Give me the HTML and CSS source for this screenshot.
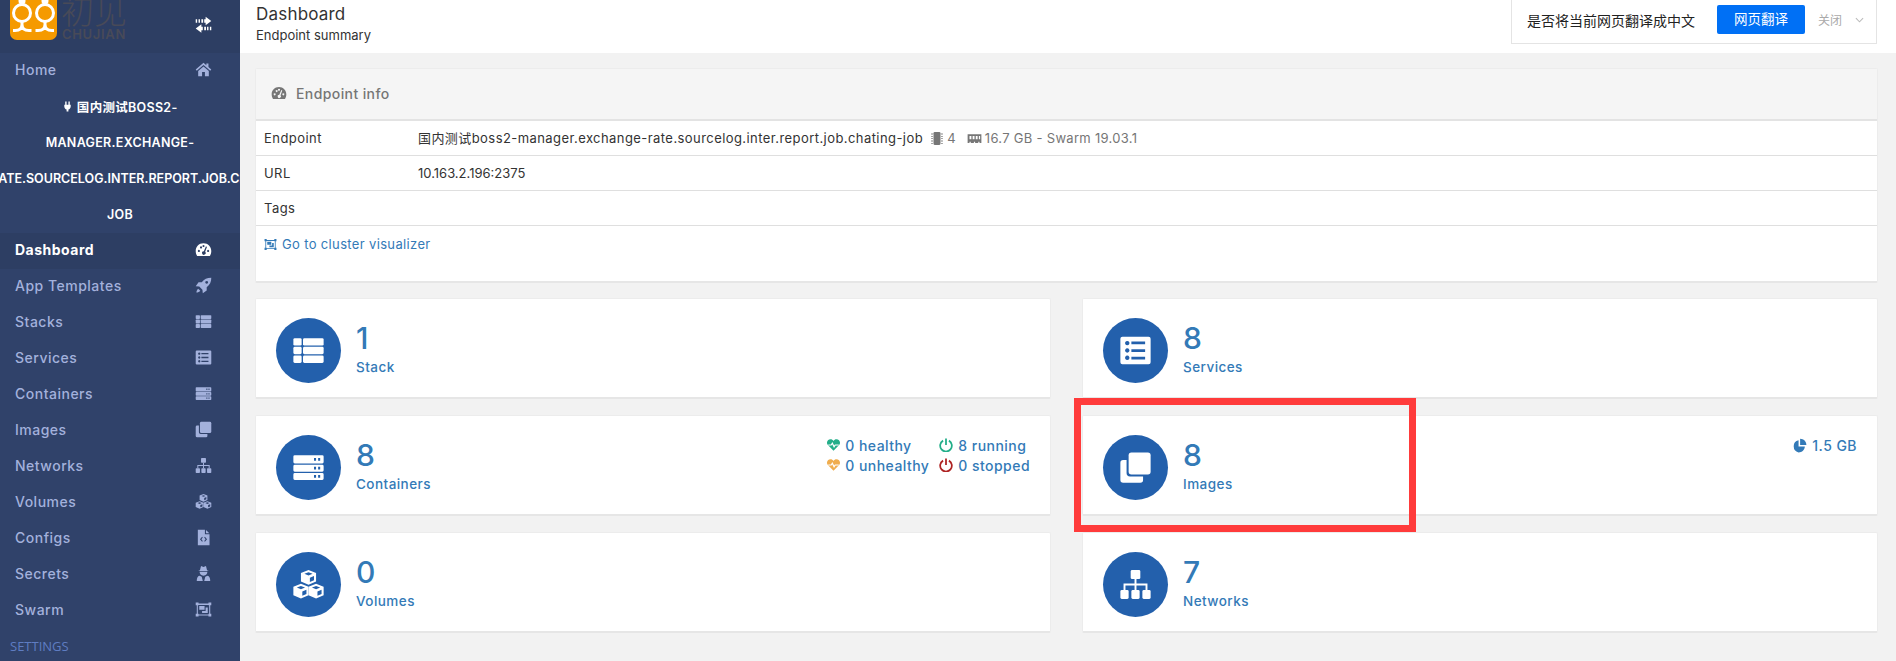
FILE: index.html
```html
<!DOCTYPE html>
<html lang="en">
<head>
    <meta charset="UTF-8">
    <meta name="viewport" content="width=device-width, initial-scale=1.0">
    <title>Dashboard</title>
    <link rel="stylesheet" href="styles.css">
</head>
<body>
    <!-- icon sprite -->
    <svg class="sprite" width="0" height="0">
        <defs>
            <symbol id="i-exchange" viewBox="0 0 24 24"><path d="M15 1l8 6-8 6V9.500H13v-5h2zM1 4.500h2v5H1zM5 4.500h2v5H5zM9 4.500h2.500v5H9zM9 11.500l-8 6 8 6V20h2v-5H9zM13 15h2.500v5H13zM17 15h2v5h-2zM21 15h2v5h-2z"/></symbol>
            <symbol id="i-home" viewBox="0 0 24 24"><path d="M12 2.500L1 12l1.500 1.700L12 5.600l9.500 8.100L23 12l-4-3.500V3.500h-3v2.500zM4.500 14L12 7.700 19.500 14v7.500H14v-6h-4v6H4.500z"/></symbol>
            <symbol id="i-plug" viewBox="0 0 24 24"><path d="M7 1h3v7H7zM14 1h3v7h-3zM5 8h14v4c0 3.500-2.500 6-5 6.500V23h-4v-4.500C7.500 18 5 15.500 5 12z"/></symbol>
            <symbol id="i-tach" viewBox="0 0 24 24"><path fill-rule="evenodd" d="M12 3C5.400 3 1 8 1 14c0 2.600.7 5 2 7h18c1.300-2 2-4.400 2-7 0-6-4.600-11-11-11zM5.500 12.500a1.500 1.500 0 1 0 .01 0zM8.500 7.500a1.500 1.500 0 1 0 .01 0zM12 5.500a1.500 1.500 0 1 0 .01 0zM18.500 12.500a1.500 1.500 0 1 0 .01 0zM15.500 7.500l-3 7a2.500 2.500 0 1 0 1.800.8l2.600-7z"/></symbol>
            <symbol id="i-rocket" viewBox="0 0 24 24"><path fill-rule="evenodd" d="M23 1c-6 0-10 2-13.500 6.500H5L1 13l5 .5 4.500 4.500.5 5 5.500-4v-4.500C21 11 23 7 23 1zM16.500 5.500a2 2 0 1 0 .01 0z"/><path d="M4.500 16.500C3 17.500 2 20 2 22c2 0 4.500-1 5.500-2.500z"/></symbol>
            <symbol id="i-stack" viewBox="0 0 24 24"><rect x="1" y="3" width="6" height="5.400" rx="1"/><rect x="8" y="3" width="15" height="5.400" rx="1"/><rect x="1" y="9.300" width="6" height="5.400" rx="1"/><rect x="8" y="9.300" width="15" height="5.400" rx="1"/><rect x="1" y="15.600" width="6" height="5.400" rx="1"/><rect x="8" y="15.600" width="15" height="5.400" rx="1"/></symbol>
            <symbol id="i-list" viewBox="0 0 24 24"><path fill-rule="evenodd" d="M2.500 2h19A1.500 1.500 0 0 1 23 3.500v17a1.500 1.500 0 0 1-1.500 1.500h-19A1.500 1.500 0 0 1 1 20.500v-17A1.500 1.500 0 0 1 2.500 2zM6 5a1.600 1.600 0 1 0 .01 0zM6 10.400a1.600 1.600 0 1 0 .01 0zM6 15.700a1.600 1.600 0 1 0 .01 0zM9 5.500h10v2H9zM9 11h10v2H9zM9 16.500h10v2H9z"/></symbol>
            <symbol id="i-server" viewBox="0 0 24 24"><path fill-rule="evenodd" d="M2 3h20a1 1 0 0 1 1 1v4a1 1 0 0 1-1 1H2a1 1 0 0 1-1-1V4a1 1 0 0 1 1-1zM16 5v2h1.500V5zM19 5v2h1.500V5zM2 10h20a1 1 0 0 1 1 1v3a1 1 0 0 1-1 1H2a1 1 0 0 1-1-1v-3a1 1 0 0 1 1-1zM16 11.500v2h1.500v-2zM19 11.500v2h1.500v-2zM2 16h20a1 1 0 0 1 1 1v3a1 1 0 0 1-1 1H2a1 1 0 0 1-1-1v-3a1 1 0 0 1 1-1zM16 17.500v2h1.500v-2zM19 17.500v2h1.500v-2z"/></symbol>
            <symbol id="i-clone" viewBox="0 0 24 24"><rect x="7" y="1" width="16" height="16" rx="2"/><path d="M5.500 6.500H3a2 2 0 0 0-2 2V21a2 2 0 0 0 2 2h12.500a2 2 0 0 0 2-2v-2.500H8a2.500 2.500 0 0 1-2.500-2.500z"/></symbol>
            <symbol id="i-sitemap" viewBox="0 0 24 24"><rect x="8.500" y="1.500" width="7" height="6.500" rx="1"/><rect x="1" y="16" width="6" height="6.500" rx="1"/><rect x="9" y="16" width="6" height="6.500" rx="1"/><rect x="17" y="16" width="6" height="6.500" rx="1"/><path d="M11.300 8h1.400v3.300H20.700V16h-1.400v-3.300h-6.600V16h-1.400v-3.300H4.700V16H3.300v-4.700h8z"/></symbol>
            <symbol id="i-cubes" viewBox="0 0 24 24"><path id="cube" fill-rule="evenodd" d="M12 1.500l5.500 2.200v6.200L12 12.200 6.500 9.900V3.700zM12 3L9 4.200l3 1.200 3-1.200zM13 7v3.200l3-1.300V5.800z"/><use href="#cube" x="-5.500" y="10"/><use href="#cube" x="5.500" y="10"/></symbol>
            <symbol id="i-file" viewBox="0 0 24 24"><path fill-rule="evenodd" d="M4 1h10v6.500h6.500V23H4zM15.500 1.300l4.700 4.700h-4.700zM10 11l-3 3.500 3 3.500 1-1-2-2.500 2-2.500zM14 11l-1 1 2 2.500-2 2.500 1 1 3-3.500z"/></symbol>
            <symbol id="i-secret" viewBox="0 0 24 24"><path fill-rule="evenodd" d="M8.500 1.500L12 2.700l3.500-1.200L17 7.500l2.500 1H4.500l2.500-1zM6.500 9.500h11c0 3-2 5.500-5.500 5.500s-5.500-2.500-5.500-5.500zM2.500 22.500c0-4 1-7 4-7.500l3 1.500L11 22.500zM21.500 22.500c0-4-1-7-4-7.500l-3 1.500-1.500 6z"/></symbol>
            <symbol id="i-swarm" viewBox="0 0 24 24"><path fill-rule="evenodd" d="M1 2h4v1.500h14V2h4v4h-1.500v12H23v4h-4v-1.500H5V22H1v-4h1.500V6H1zM5 5.500V6H4v12h1v1h14v-1h1V6h-1V5.500zM6 7h7.500v5.500H6zM15 9h3v8h-8v-3h5z"/></symbol>
            <symbol id="i-pie" viewBox="0 0 24 24"><path d="M10.500 3.500v10h10c0 5-4.500 9.500-10 9.500A10 10 0 0 1 10.500 3.500z"/><path d="M13 1c5.500 0 10 4.500 10 10H13z"/></symbol>
            <symbol id="i-chip" viewBox="0 0 24 24"><rect x="6" y="1" width="12" height="22" rx="2"/><path d="M2 3.500h3v1.500H2zM2 7.500h3v1.500H2zM2 11.500h3v1.500H2zM2 15.500h3v1.500H2zM2 19.500h3v1.500H2zM19 3.500h3v1.500h-3zM19 7.500h3v1.500h-3zM19 11.500h3v1.500h-3zM19 15.500h3v1.500h-3zM19 19.500h3v1.500h-3z"/></symbol>
            <symbol id="i-ram" viewBox="0 0 24 24"><path fill-rule="evenodd" d="M1 5h22v14H20v-2h-2v2h-5v-2h-2v2H6v-2H4v2H1zM4 8v5h3V8zM9 8v5h3V8zM14 8v5h3V8zM19 8v5h2V8z"/></symbol>
        </defs>
    </svg>

    <div class="app">
        <aside class="sidebar">
            <div class="brand">
                <svg class="brand-logo" viewBox="0 0 47 48">
                    <rect width="47" height="48" rx="7" fill="#f59a00"/>
                    <g fill="none" stroke="#fff" stroke-width="3">
                        <circle cx="12" cy="21" r="8.500"/>
                        <circle cx="35" cy="21" r="8.500"/>
                        <path d="M12 29.500v3q0 6-7 6H3M12 32.500q0 6 7 6h2.500M35 29.500v3q0 6-7 6h-2.500M35 32.500q0 6 7 6h2"/>
                    </g>
                    <circle cx="12" cy="9" r="3.500" fill="#fff"/>
                    <circle cx="35" cy="9" r="3.500" fill="#fff"/>
                </svg>
                <div class="brand-name">
                    <span class="brand-cn">初见</span>
                    <span class="brand-en">CHUJIAN</span>
                </div>
                <svg class="nav-icon brand-toggle"><use href="#i-exchange"/></svg>
            </div>
            <a class="nav-item"><span>Home</span><svg class="nav-icon"><use href="#i-home"/></svg></a>
            <div class="endpoint-name">
                <div><svg class="plug"><use href="#i-plug"/></svg>&nbsp;国内测试BOSS2-</div>
                <div>MANAGER.EXCHANGE-</div>
                <div class="endpoint-long">RATE.SOURCELOG.INTER.REPORT.JOB.CHATING-</div>
                <div>JOB</div>
            </div>
            <a class="nav-item active"><span>Dashboard</span><svg class="nav-icon"><use href="#i-tach"/></svg></a>
            <a class="nav-item"><span>App Templates</span><svg class="nav-icon"><use href="#i-rocket"/></svg></a>
            <a class="nav-item"><span>Stacks</span><svg class="nav-icon"><use href="#i-stack"/></svg></a>
            <a class="nav-item"><span>Services</span><svg class="nav-icon"><use href="#i-list"/></svg></a>
            <a class="nav-item"><span>Containers</span><svg class="nav-icon"><use href="#i-server"/></svg></a>
            <a class="nav-item"><span>Images</span><svg class="nav-icon"><use href="#i-clone"/></svg></a>
            <a class="nav-item"><span>Networks</span><svg class="nav-icon"><use href="#i-sitemap"/></svg></a>
            <a class="nav-item"><span>Volumes</span><svg class="nav-icon"><use href="#i-cubes"/></svg></a>
            <a class="nav-item"><span>Configs</span><svg class="nav-icon"><use href="#i-file"/></svg></a>
            <a class="nav-item"><span>Secrets</span><svg class="nav-icon"><use href="#i-secret"/></svg></a>
            <a class="nav-item"><span>Swarm</span><svg class="nav-icon"><use href="#i-swarm"/></svg></a>
            <div class="nav-title">SETTINGS</div>
        </aside>

        <div class="main">
            <header class="topbar">
                <div class="page-title">
                    <div class="page-name">Dashboard</div>
                    <div class="page-sub">Endpoint summary</div>
                </div>
                <div class="translate">
                    <span class="translate-text">是否将当前网页翻译成中文</span>
                    <span class="translate-btn">网页翻译</span>
                    <span class="translate-close">关闭</span>
                    <svg class="translate-arrow" viewBox="0 0 10 6"><path d="M1 1l4 4 4-4" fill="none" stroke="#bbb" stroke-width="1.200"/></svg>
                </div>
            </header>

            <div class="content">
                <section class="card info">
                    <div class="info-head">
                        <svg class="info-icon"><use href="#i-tach"/></svg>
                        <span>Endpoint info</span>
                    </div>
                    <div class="info-row">
                        <div class="info-key">Endpoint</div>
                        <div class="info-value wide">
                            国内测试boss2-manager.exchange-rate.sourcelog.inter.report.job.chating-job
                            <span class="info-meta">
                                <svg class="meta-icon chip"><use href="#i-chip"/></svg>4
                                <svg class="meta-icon ram"><use href="#i-ram"/></svg>16.7 GB - Swarm 19.03.1
                            </span>
                        </div>
                    </div>
                    <div class="info-row">
                        <div class="info-key">URL</div>
                        <div class="info-value">10.163.2.196:2375</div>
                    </div>
                    <div class="info-row">
                        <div class="info-key">Tags</div>
                        <div class="info-value"></div>
                    </div>
                    <div class="info-link"><svg class="link-icon"><use href="#i-swarm"/></svg>Go to cluster visualizer</div>
                </section>

                <div class="tiles">
                    <section class="card tile">
                        <div class="tile-circle"><svg><use href="#i-stack"/></svg></div>
                        <div class="tile-text"><div class="tile-num">1</div><div class="tile-label">Stack</div></div>
                    </section>
                    <section class="card tile">
                        <div class="tile-circle"><svg><use href="#i-list"/></svg></div>
                        <div class="tile-text"><div class="tile-num">8</div><div class="tile-label">Services</div></div>
                    </section>
                    <section class="card tile">
                        <div class="tile-circle"><svg><use href="#i-server"/></svg></div>
                        <div class="tile-text"><div class="tile-num">8</div><div class="tile-label">Containers</div></div>
                        <div class="tile-status">
                            <div class="status-col">
                                <div class="status"><svg class="heart green" viewBox="0 0 24 24"><path d="M12 22L2 11.500C-1 7.500 2 2 7 2c2.200 0 3.800 1 5 3 1.200-2 2.800-3 5-3 5 0 8 5.500 5 9.500z"/><path class="pulse" d="M3 12h5l2-3 3 6 2-3h6"/></svg>0 healthy</div>
                                <div class="status"><svg class="heart orange" viewBox="0 0 24 24"><path d="M12 22L2 11.500C-1 7.500 2 2 7 2c2.200 0 3.800 1 5 3 1.200-2 2.800-3 5-3 5 0 8 5.500 5 9.500z"/><path class="pulse" d="M3 12h5l2-3 3 6 2-3h6"/></svg>0 unhealthy</div>
                            </div>
                            <div class="status-col">
                                <div class="status"><svg class="power green" viewBox="0 0 24 24"><path d="M7 4.500a10 10 0 1 0 10 0M12 1v11"/></svg>8 running</div>
                                <div class="status"><svg class="power red" viewBox="0 0 24 24"><path d="M7 4.500a10 10 0 1 0 10 0M12 1v11"/></svg>0 stopped</div>
                            </div>
                        </div>
                    </section>
                    <section class="card tile">
                        <div class="tile-circle"><svg><use href="#i-clone"/></svg></div>
                        <div class="tile-text"><div class="tile-num">8</div><div class="tile-label">Images</div></div>
                        <div class="tile-status">
                            <div class="status"><svg class="pie"><use href="#i-pie"/></svg>1.5 GB</div>
                        </div>
                    </section>
                    <section class="card tile">
                        <div class="tile-circle"><svg><use href="#i-cubes"/></svg></div>
                        <div class="tile-text"><div class="tile-num">0</div><div class="tile-label">Volumes</div></div>
                    </section>
                    <section class="card tile">
                        <div class="tile-circle"><svg><use href="#i-sitemap"/></svg></div>
                        <div class="tile-text"><div class="tile-num">7</div><div class="tile-label">Networks</div></div>
                    </section>
                </div>
            </div>
        </div>
    </div>

    <!-- annotation drawn over the screenshot -->
    <div class="highlight"></div>
</body>
</html>
```

FILE: styles.css
```css
* {
    box-sizing: border-box;
}

html, body {
    height: 100%;
    margin: 0;
    overflow: hidden;
}

body {
    background: #f2f2f2;
    color: #333;
    font-family: Inter, "Noto Sans CJK SC", sans-serif;
    font-size: 13px;
}

svg {
    fill: currentColor;
}

.sprite {
    position: absolute;
}

.app {
    display: flex;
    height: 661px;
}

/* sidebar */
.sidebar {
    flex: 0 0 240px;
    width: 240px;
    background: #30426a;
    overflow: hidden;
}

.brand {
    display: flex;
    align-items: flex-end;
    height: 53px;
    padding: 0 0 13px 10px;
    background: #2d3e63;
    overflow: hidden;
}

.brand-logo {
    flex: none;
    width: 47px;
    height: 48px;
}

.brand-name {
    display: flex;
    flex-direction: column;
    align-items: center;
    width: 66px;
    margin-left: 4px;
    color: #484a58;
}

.brand-cn {
    font-size: 33px;
    line-height: 27px;
    font-weight: 300;
}

.brand-en {
    margin-top: 3px;
    font-size: 13px;
    line-height: 11px;
    font-weight: 600;
    letter-spacing: .7px;
}

.nav-item {
    display: flex;
    align-items: center;
    justify-content: space-between;
    height: 36px;
    padding: 0 0 3px 15px;
    color: #a3b1dc;
    font-size: 14px;
    font-weight: 500;
    letter-spacing: .5px;
}

.nav-item.active {
    background: #2d3e63;
    color: #fff;
    font-weight: 700;
}

.nav-icon {
    flex: none;
    width: 17px;
    height: 17px;
    margin-right: 28px;
}

.brand-toggle {
    align-self: center;
    position: relative;
    top: 4px;
    margin-left: auto;
    color: #fff;
}

.endpoint-name {
    color: #fff;
    font-size: 12.5px;
    font-weight: 600;
    letter-spacing: .3px;
}

.endpoint-name div {
    display: flex;
    justify-content: center;
    align-items: center;
    height: 36px;
    padding-bottom: 2px;
    white-space: nowrap;
}

/* this line is wider than the sidebar and runs off both sides */
.endpoint-name .endpoint-long {
    justify-content: flex-start;
    margin-left: -10px;
    letter-spacing: 0;
}

.plug {
    flex: none;
    width: 11px;
    height: 13px;
}

.nav-title {
    padding-left: 10px;
    margin-top: 8px;
    color: #5f7dc2;
    font-family: "Open Sans", sans-serif;
    font-size: 13px;
}

/* top bar */
.main {
    flex: 1;
    min-width: 0;
}

.topbar {
    display: flex;
    justify-content: space-between;
    height: 53px;
    padding: 0 19px 0 16px;
    background: #fff;
}

.page-name {
    margin-top: 4px;
    font-size: 17px;
    line-height: 20px;
    letter-spacing: .2px;
}

.page-sub {
    margin-top: 3px;
    font-size: 13px;
    line-height: 16px;
}

.translate {
    display: flex;
    align-items: center;
    width: 366px;
    height: 44px;
    padding: 0 0 4px 15px;
    border: 1px solid #e4e4e4;
    border-top: 0;
    font-size: 14px;
    color: #222;
}

.translate-btn {
    width: 88px;
    height: 29px;
    margin-left: 22px;
    border-radius: 2px;
    background: #0070f5;
    color: #fff;
    font-size: 13.5px;
    line-height: 29px;
    text-align: center;
}

.translate-close {
    margin-left: 13px;
    color: #aaa;
    font-size: 12px;
}

.translate-arrow {
    width: 9px;
    height: 6px;
    margin-left: 13px;
}

/* content */
.content {
    padding: 15px 18px 0 15px;
}

.card {
    background: #fff;
    border: 1px solid #ececec;
    border-bottom: 2px solid #e6e6e6;
    border-radius: 2px;
}

.info {
    height: 215px;
}

.info-head {
    display: flex;
    align-items: center;
    height: 52px;
    padding: 0 0 2px 15px;
    background: #f5f5f5;
    border-bottom: 2px solid #e3e3e3;
    color: #767676;
    font-size: 14px;
    font-weight: 500;
    letter-spacing: .4px;
}

.info-icon {
    width: 16px;
    height: 16px;
    margin-right: 9px;
}

.info-row {
    display: flex;
    align-items: center;
    height: 35px;
    padding: 0 0 1px 8px;
    border-bottom: 1px solid #dfdfdf;
}

.info-key {
    flex: 0 0 154px;
    letter-spacing: .45px;
}

.info-value {
    white-space: nowrap;
}

.info-value.wide {
    letter-spacing: .43px;
}

.info-meta {
    margin-left: 3px;
    color: #767676;
    letter-spacing: .3px;
}

.meta-icon {
    vertical-align: -3px;
}

.chip {
    width: 14px;
    height: 15px;
    margin-right: 3px;
}

.ram {
    width: 17px;
    height: 15px;
    margin: 0 2px 0 6px;
}

.info-link {
    display: flex;
    align-items: center;
    padding: 10px 0 0 8px;
    color: #337ab7;
    letter-spacing: .35px;
}

.link-icon {
    width: 13px;
    height: 13px;
    margin-right: 5px;
}

.tiles {
    display: grid;
    grid-template-columns: repeat(2, 1fr);
    gap: 16px 31px;
    margin-top: 15px;
}

.tile {
    display: flex;
    align-items: flex-start;
    height: 101px;
    padding: 19px 20px 0 20px;
}

.tile-circle {
    display: flex;
    align-items: center;
    justify-content: center;
    flex: none;
    width: 65px;
    height: 65px;
    border-radius: 50%;
    background: #2360ac;
    color: #fff;
}

.tile-circle svg {
    width: 33px;
    height: 33px;
}

.tile-text {
    margin-left: 15px;
    color: #337ab7;
}

.tile-num {
    margin-top: 2px;
    font-size: 30px;
    font-weight: 500;
    line-height: 36px;
}

.tile-label {
    margin-top: 2px;
    font-size: 13.5px;
    font-weight: 500;
    line-height: 18px;
    letter-spacing: .45px;
}

.tile-status {
    display: flex;
    gap: 10px;
    margin-left: auto;
    color: #337ab7;
    font-size: 14px;
    font-weight: 500;
    letter-spacing: .45px;
}

.status {
    display: flex;
    align-items: center;
    height: 20px;
}

.heart {
    width: 15px;
    height: 14px;
    margin-right: 4px;
}

.pulse {
    fill: none;
    stroke: #fff;
    stroke-width: 2;
}

.power {
    width: 14px;
    height: 14px;
    margin-right: 5px;
    fill: none;
    stroke-width: 3;
}

.heart.green {
    color: #23ae89;
}

.heart.orange {
    color: #f0ad4e;
}

.power.green {
    stroke: #23ae89;
}

.power.red {
    stroke: #ae2323;
}

.pie {
    width: 15px;
    height: 15px;
    margin-right: 5px;
}

/* red annotation box */
.highlight {
    position: absolute;
    left: 1074px;
    top: 398px;
    width: 342px;
    height: 134px;
    border: 7px solid #ff3b3b;
}
```
